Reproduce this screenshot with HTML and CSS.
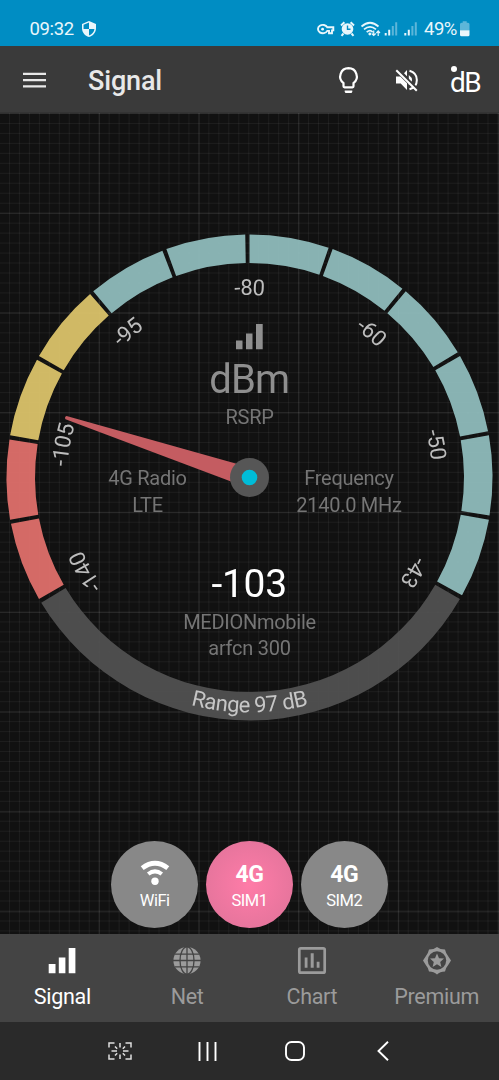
FILE: index.html
```html
<!DOCTYPE html>
<html lang="en">
<head>
<meta charset="utf-8">
<title>Signal</title>
<link rel="stylesheet" href="styles.css">
</head>
<body>
<div class="status">
  <span class="time">09:32</span>
  <svg class="shield" width="14" height="16" viewBox="3 1 18 22" preserveAspectRatio="none"><path d="M12 1 3 5v6c0 5.55 3.84 10.74 9 12 5.16-1.26 9-6.45 9-12V5zm0 11h7c-.53 4.1-3.28 7.8-7 8.9V12H5V6.3l7-3.1z"/></svg>
  <div class="status-right">
    <svg width="153" height="18" viewBox="317 20 153 18">
      <g fill="none" stroke="#e9f6fb" stroke-width="1.9"><path d="M327.3 27.3a4.9 4.2 0 1 0 0 3.6h1.7v2.4h3v-2.9h1.3v-3.1z"/></g>
      <circle cx="322.6" cy="29.2" r="1.4"/>
      <circle cx="347.5" cy="29" r="5.8"/>
      <path d="m341 25.4 3.4-3.2M354 25.4l-3.4-3.2M343.5 33.5l-2 2.3M351.5 33.5l2 2.3" stroke="#e9f6fb" stroke-width="2"/>
      <path d="M347.500 25.500v3.800h3" fill="none" stroke="#068dc3" stroke-width="1.400"/>
      <g fill="none" stroke="#e9f6fb" stroke-width="1.700"><path d="M361.500 26.500q8.500-7.500 17 0M364 29.400q6-5 12 0M366.700 32.200q3.500-3 6 0"/><path d="M373.700 30.500v5m-2-2 2 2 2-2M378.200 36v-5m-1.800 2 1.800-2 1.800 2" stroke-width="1.200"/></g>
      <circle cx="369.800" cy="34" r="1.400"/>
      <path d="M384.700 33h2v2.500h-2zM388.200 29.800h2v5.700h-2zM404.300 33h2v2.500h-2zM407.800 29.800h2v5.700h-2z"/>
      <path opacity=".4" d="M391.800 26h2v9.500h-2zM395.200 22.300h2v13.200h-2zM411.400 26h2v9.500h-2zM414.800 22.300h2v13.200h-2z"/>
      <text class="battery-text" x="424" y="35.300">49%</text>
      <path opacity=".4" d="M462.700 21.300h4v1.500h1.300q1.500 0 1.500 1.500v6h-9.500v-6q0-1.500 1.500-1.500h1.200z"/>
      <path d="M460 30.300h9.500v4.400q0 1.500-1.500 1.500h-6.500q-1.500 0-1.500-1.500z"/>
    </svg>
  </div>
</div>

<header class="bar">
  <svg class="menu" width="23" height="16" viewBox="0 0 23 16"><path d="M0 .7h23V3H0zM0 7h23v2.300H0zM0 13.200h23v2.300H0z"/></svg>
  <h1 class="title">Signal</h1>
  <svg class="tools" width="142" height="32" viewBox="338 65 142 32">
    <path d="M348.500 68.200a8.300 8.300 0 0 0-5 14.900v3.200q0 1 1 1h8q1 0 1-1v-3.200a8.300 8.300 0 0 0-5-14.900z" fill="none" stroke="#fff" stroke-width="2.200"/>
    <path d="M344.700 90.500h7.600v1q0 1.500-1.500 1.500h-4.600q-1.500 0-1.500-1.500z"/>
    <path d="M396 76.400h4.300l6.700 6.800v6.700l-6.300-6.300H396zM407 70v6.300l-3-3z"/>
    <path d="M409.500 70.800c9.800 2.700 9.800 15.700 0 18.500" fill="none" stroke="#fff" stroke-width="2"/>
    <path d="M408.800 75q6.500 5 0 10z"/>
    <path d="m397.700 69.300 20.300 20.300" fill="none" stroke="#3a3a3a" stroke-width="2.400"/>
    <path d="m396.300 70.200 20.500 20.500" stroke="#fff" stroke-width="2"/>
    <text class="db" x="450" y="91.700">dB</text>
    <circle cx="454" cy="69" r="3"/>
  </svg>
</header>

<main class="stage">
  <svg class="gauge" width="499" height="600" viewBox="0 233 499 600">
    <defs>
      <path id="dial" d="M249.500 660a182.500 182.500 0 0 1 0-365a182.500 182.500 0 0 1 0 365"/>
      <path id="rim" d="M14.500 477.500a235 235 0 0 0 470 0"/>
      <path id="seg" d="M249.500 234.400A243 243 0 0 1 328.610 247.740L319.330 274.690A214.500 214.500 0 0 0 249.500 263z"/>
    </defs>
    <g class="arc">
      <g class="red"><use href="#seg" transform="rotate(-120 249.500 477.500)"/><use href="#seg" transform="rotate(-100 249.500 477.500)"/></g>
      <g class="yellow"><use href="#seg" transform="rotate(-80 249.500 477.500)"/><use href="#seg" transform="rotate(-60 249.500 477.500)"/></g>
      <g class="teal"><use href="#seg" transform="rotate(-40 249.500 477.500)"/><use href="#seg" transform="rotate(-20 249.500 477.500)"/><use href="#seg"/><use href="#seg" transform="rotate(20 249.500 477.500)"/><use href="#seg" transform="rotate(40 249.500 477.500)"/><use href="#seg" transform="rotate(60 249.500 477.500)"/><use href="#seg" transform="rotate(80 249.500 477.500)"/><use href="#seg" transform="rotate(100 249.500 477.500)"/></g>
      <path class="rest" d="M459.940 599A243 243 0 0 1 41.210 602.650L65.640 587.980A214.500 214.500 0 0 0 435.260 584.750z"/>
    </g>
    <g class="ticks">
      <text><textPath href="#dial" startOffset="16.670%">-140</textPath></text>
      <text><textPath href="#dial" startOffset="27.780%">-105</textPath></text>
      <text><textPath href="#dial" startOffset="38.890%">-95</textPath></text>
      <text><textPath href="#dial" startOffset="50%">-80</textPath></text>
      <text><textPath href="#dial" startOffset="61.110%">-60</textPath></text>
      <text><textPath href="#dial" startOffset="72.220%">-50</textPath></text>
      <text><textPath href="#dial" startOffset="83.330%">-43</textPath></text>
      <text class="range"><textPath href="#rim" startOffset="50%">Range 97 dB</textPath></text>
    </g>
    <path class="bars" d="M236 340.500h6.500v8.700H236zM246 333.500h6.500v15.700H246zM256 324h6.700v25.200H256z"/>
    <text class="unit" x="249.300" y="393">dBm</text>
    <g class="info">
      <text x="249.500" y="424">RSRP</text>
      <text x="147.500" y="485">4G Radio</text>
      <text x="147.500" y="511.500">LTE</text>
      <text x="349" y="485">Frequency</text>
      <text x="349" y="511.500">2140.0 MHz</text>
      <text x="249.500" y="628.700">MEDIONmobile</text>
      <text x="249.500" y="655">arfcn 300</text>
    </g>
    <text class="value" x="249.200" y="597">-103</text>
    <g transform="translate(249.500 477.500)">
      <path class="needle" transform="rotate(198.100)" d="M0-10.300 193-1.700q2 1.700 0 3.400L0 9.800z"/>
      <circle r="19.500" fill="#565656"/><circle r="7.800" fill="#00bcd8"/>
    </g>
  </svg>
  <div class="sources">
    <div class="source">
      <svg width="30" height="26" viewBox="0 0 30 26"><g fill="none" stroke="#fff"><path d="M2.200 8.200q12.800-9.800 25.600 0" stroke-width="4.800"/><path d="M8.200 14q6.800-5.300 13.600 0" stroke-width="4"/></g><circle cx="15" cy="21.200" r="3.700" fill="#fff"/></svg>
      <span>WiFi</span>
    </div>
    <div class="source active"><b>4G</b><span>SIM1</span></div>
    <div class="source"><b>4G</b><span>SIM2</span></div>
  </div>
</main>

<nav class="tabs">
  <div class="tab on">
    <svg width="28" height="28" viewBox="0 0 28 28"><path d="M.7 17.500h6.800v9.300H.7zM10.800 11h6.600v15.800h-6.600zM20.700 1.500h6.700v25.300h-6.700z"/></svg>
    <span>Signal</span>
  </div>
  <div class="tab">
    <svg width="28" height="28" viewBox="0 0 28 28"><circle cx="14" cy="14" r="13.600"/><g fill="none" stroke="#444" stroke-width="1.300"><path d="M14 0v29M0 14h28M2 7.700h24M2 20.300h24"/><ellipse cx="14" cy="14" rx="7" ry="13.600"/></g></svg>
    <span>Net</span>
  </div>
  <div class="tab">
    <svg width="28" height="28" viewBox="0 0 28 28"><rect x="1.300" y="1.800" width="25.400" height="24.400" rx="1.500" fill="none" stroke="#9b9b9b" stroke-width="2.700"/><path d="M6.700 11h2.800v10.200H6.700zM12.700 6.800h3v14.400h-3zM18.700 15.200h2.800v6h-2.800z"/></svg>
    <span>Chart</span>
  </div>
  <div class="tab">
    <svg width="28" height="29" viewBox="0 0 28 29"><path d="M14 1q3 2.600 8 2.600 1 4.500 3.200 6.700L28 14.600l-2.800 4.300q-2.200 2.300-3.200 6.700-5 0-8 2.900-3-2.900-8-2.900-1-4.400-3.200-6.700L0 14.600l2.800-4.300Q5 8.100 6 3.600 11 3.600 14 1z"/><circle cx="14" cy="14.500" r="9.200" fill="#444"/><path d="m14 7.500 2 4.700 5 .4-3.800 3.300 1.200 5-4.400-2.700-4.400 2.700 1.200-5L7 12.600l5-.4z"/></svg>
    <span>Premium</span>
  </div>
</nav>

<footer class="sysnav">
  <svg class="capture" width="24" height="18" viewBox="0 0 24 18"><path d="M1 5.500V1h5.500M17.500 1H23v4.500M23 12.500V17h-5.500M6.500 17H1v-4.500M12 1v4.500M12 12.500V17M3.500 9H9M15 9h5.500M7 4.500l2.200 2.200M17 4.500l-2.200 2.200M7 13.500l2.200-2.200M17 13.500l-2.200-2.200"/></svg>
  <svg class="recents" width="19" height="19" viewBox="0 0 19 19"><path d="M1.500 0v19M9.500 0v19M17.500 0v19"/></svg>
  <svg class="home" width="20" height="20" viewBox="0 0 20 20"><rect x="1" y="1" width="18" height="18" rx="5.500"/></svg>
  <svg class="back" width="12" height="20" viewBox="0 0 12 20"><path d="M11 .8 1.500 10l9.500 9.200"/></svg>
</footer>
</body>
</html>
```

FILE: styles.css
```css
* { box-sizing: border-box; }

body {
  margin: 0;
  width: 499px;
  height: 1080px;
  display: flex;
  flex-direction: column;
  overflow: hidden;
  background: #111;
  color: #fff;
  font-family: Roboto, "Liberation Sans", sans-serif;
}

svg { display: block; flex: none; overflow: visible; }

.status {
  height: 45.500px;
  flex: none;
  display: flex;
  align-items: center;
  padding: 12px 29px 0 29.500px;
  background: #008dc3;
  color: #e9f6fb;
  fill: #e9f6fb;
}
.time { font-size: 18.500px; line-height: 20px; width: 52.500px; letter-spacing: -.35px; }
.status-right { margin-left: auto; }
.battery-text { font-size: 18.500px; letter-spacing: -.5px; }

.bar {
  height: 67.500px;
  flex: none;
  display: flex;
  align-items: center;
  padding: 2px 19px 0 23px;
  background: #3a3a3a;
  border-bottom: 1px solid #333;
  fill: #fff;
}
.menu { fill: #e8e8e8; }
.title { margin: 2px 0 0 42px; font-size: 27px; line-height: 32px; font-weight: 500; letter-spacing: -.15px; color: #e8e8e8; }
.tools { margin: 2px 0 0 auto; }
.db { font-size: 28px; letter-spacing: -1.500px; }

.stage {
  height: 821px;
  flex: none;
  display: flex;
  flex-direction: column;
  align-items: center;
  padding-top: 120px;
  background:
    linear-gradient(90deg, transparent 98.800px, #ffffff14 98.800px) 0 0 / 99.800px 99.800px,
    linear-gradient(90deg, transparent 8.980px, #ffffff0d 8.980px) 0 0 / 9.980px 9.980px,
    linear-gradient(#ffffff14 1px, transparent 1px) 0 0 / 99.800px 99.800px,
    linear-gradient(#ffffff0d 1px, transparent 1px) 0 0 / 9.980px 9.980px,
    #111;
}
.gauge { height: 600px; }
.arc { opacity: .93; }
.red { fill: #e3726d; }
.yellow { fill: #dfc66c; }
.teal { fill: #92bfbf; }
.rest { fill: #525252; }
.ticks { font-size: 22px; fill: #bdbdbd; text-anchor: middle; letter-spacing: -.45px; }
.range { fill: #c6c6c6; }
.bars, .unit { fill: #8f8f8f; }
.unit { font-size: 40px; letter-spacing: -.9px; text-anchor: middle; }
.info { font-size: 20px; fill: #757575; text-anchor: middle; letter-spacing: -.27px; }
.value { font-size: 39px; letter-spacing: -.3px; fill: #fff; text-anchor: middle; }
.needle { fill: #c45c61; }

.sources { display: flex; gap: 7.500px; margin-top: 8px; }
.source {
  width: 87.300px;
  height: 87.300px;
  border-radius: 50%;
  background: #888;
  display: flex;
  flex-direction: column;
  align-items: center;
  padding-top: 19px;
  font-size: 16.500px;
  line-height: 20px;
  letter-spacing: -.5px;
}
.source b { font-size: 23px; line-height: 29px; font-weight: 700; margin-bottom: 1.500px; }
.source svg { margin-bottom: 4.500px; }
.active { background: radial-gradient(circle, #ff7ca8 0, #dd7298 100%); }

.tabs { height: 88px; flex: none; display: flex; background: #444; }
.tab {
  flex: 1;
  display: flex;
  flex-direction: column;
  align-items: center;
  padding-top: 12px;
  color: #9b9b9b;
  fill: #9b9b9b;
  font-size: 21.500px;
  letter-spacing: -.3px;
}
.tab svg { height: 29px; }
.tab span { margin-top: 9px; line-height: 25px; }
.on { color: #fff; fill: #fff; }

.sysnav {
  height: 58px;
  flex: none;
  display: flex;
  align-items: center;
  padding-left: 108px;
  background: #2a2a2a;
  fill: none;
  stroke: #fff;
  stroke-width: 1.900;
}
.capture { stroke-width: 1.500; stroke: #e0e0e0; }
.recents { margin-left: 66px; }
.home { margin-left: 68px; }
.back { margin-left: 72px; }
```
